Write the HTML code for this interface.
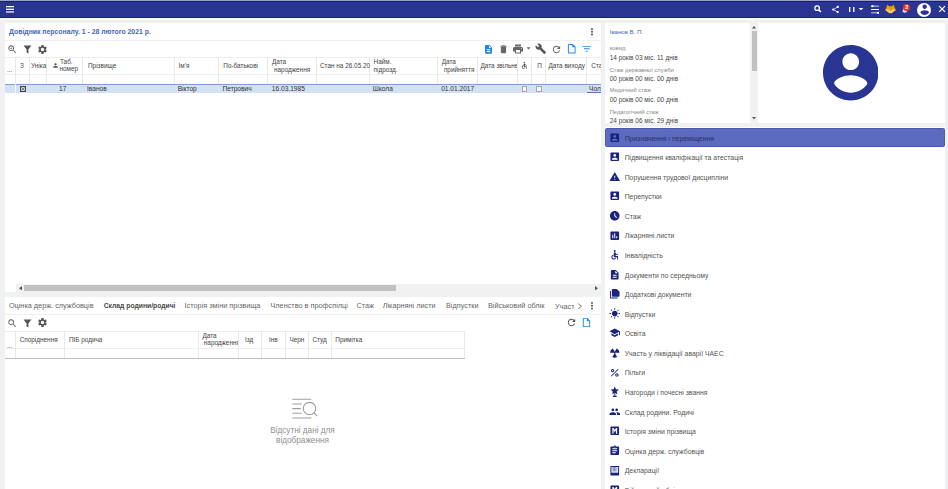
<!DOCTYPE html>
<html><head><meta charset="utf-8">
<style>
*{box-sizing:border-box;margin:0;padding:0}
html,body{width:948px;height:489px;overflow:hidden}
body{position:relative;background:#f0f1f3;font-family:"Liberation Sans",sans-serif;color:#333}
.a{position:absolute}
.t{position:absolute;white-space:nowrap;line-height:1}
svg{position:absolute;display:block}
#top{left:0;top:0;width:948px;height:18px;background:#283593;border-top:1px solid #8f96c8;border-bottom:1px solid #1f2a80}
.panel{position:absolute;background:#fff}
.hl{position:absolute;height:1px;background:#e6e6e6}
.vl{position:absolute;width:1px;background:#e9e9e9}
.hd{font-size:6.4px;color:#444}
.cell{font-size:6.6px;color:#333}
.tab{font-size:7.3px;color:#666;top:302.2px}
.mi{position:absolute;left:605px;width:339.5px;height:19.6px}
.mi .t{left:19.7px;top:8px;font-size:6.87px;color:#555}
.mi.act .t{color:#2b2f62}
.mi svg{left:3.8px;top:4.2px;width:11.5px;height:11.5px;fill:#1a237e}
</style></head>
<body>
<!-- top bar -->
<div class="a" style="left:0;top:0;width:948px;height:18px;background:#2a3593"></div>
<div class="a" style="left:0;top:0;width:948px;height:1px;background:#a09fcb"></div>
<div class="a" style="left:0;top:1px;width:948px;height:1px;background:#111c86"></div>
<div class="a" style="left:0;top:17px;width:948px;height:1px;background:#16208a"></div>
<div class="a" style="left:0;top:18px;width:948px;height:2px;background:#f8f8f6"></div>
<svg style="left:5.8px;top:6.4px;width:8.2px;height:6.6px" viewBox="0 0 8.2 6.6" fill="#fff"><rect x="0" y="0" width="8.2" height="1.25"/><rect x="0" y="2.67" width="8.2" height="1.25"/><rect x="0" y="5.35" width="8.2" height="1.25"/></svg>


<svg style="left:812px;top:3px;width:12px;height:12px" viewBox="812 3 12 12" fill="none" stroke="#fff"><circle cx="817.1" cy="8.2" r="2.25" stroke-width="1.25"/><path d="M818.8 9.9L820.9 12" stroke-width="1.5"/></svg>
<svg style="left:831px;top:5px;width:9px;height:9px" viewBox="0 0 24 24" fill="#fff"><path d="M18 16.08c-.76 0-1.440.3-1.96.77L8.91 12.7c.05-.23.09-.46.09-.7s-.04-.47-.09-.7l7.05-4.11c.54.5 1.250.81 2.04.81 1.66 0 3-1.34 3-3s-1.34-3-3-3-3 1.34-3 3c0 .24.04.47.09.7L8.04 9.81C7.5 9.31 6.79 9 6 9c-1.66 0-3 1.34-3 3s1.34 3 3 3c.79 0 1.5-.31 2.04-.81l7.12 4.16c-.05.21-.08.43-.08.65 0 1.61 1.31 2.92 2.92 2.92 1.61 0 2.92-1.31 2.92-2.92s-1.31-2.92-2.92-2.92z"/></svg>
<svg style="left:848px;top:6.5px;width:7.5px;height:5.5px" viewBox="0 0 7.5 5.5" fill="#fff"><rect x="1" y="0" width="1.35" height="5.5"/><rect x="5.1" y="0" width="1.35" height="5.5"/></svg>
<svg style="left:857px;top:5px;width:8px;height:8px" viewBox="0 0 24 24" fill="#fff"><path d="M5 9l7 7 7-7z"/></svg>
<svg style="left:870.5px;top:4.8px;width:8.5px;height:9px" viewBox="0 0 17 18" fill="#fff"><rect x="0" y="1.6" width="17" height="1.6" rx=".8"/><rect x="0" y="8.2" width="17" height="1.6" rx=".8"/><rect x="0" y="14.8" width="17" height="1.6" rx=".8"/><circle cx="2.8" cy="2.4" r="2.3"/><circle cx="14.2" cy="15.6" r="2.3"/></svg>
<svg style="left:884px;top:4px;width:12.5px;height:10.5px" viewBox="884 4 12.5 10.5"><path d="M886.2 8.2L887.2 4.8 889.2 6.3H892L893.7 4.8 894.8 8.2 896 10 890.5 14 885 10Z" fill="#eea20a"/><path d="M890.5 6.3L892 6.3 890.5 13.5Z" fill="#d88a00"/><path d="M885.5 10L888 9.2 890.5 11 893 9.2 895.5 10 890.5 13.8Z" fill="#f6cf78"/><path d="M889.8 13.1h1.4L890.5 14.2Z" fill="#222"/></svg>
<svg style="left:900.5px;top:6px;width:7.5px;height:8px" viewBox="0 0 24 24" fill="#d8e6fb"><path d="M12 22c1.1 0 2-.9 2-2h-4c0 1.1.89 2 2 2zm6-6v-5c0-3.07-1.64-5.64-4.5-6.32V4c0-.83-.67-1.5-1.5-1.5s-1.5.67-1.5 1.5v.68C7.63 5.36 6 7.92 6 11v5l-2 2v1h16v-1l-2-2z"/></svg>
<div class="a" style="left:903.1px;top:3.5px;width:7.2px;height:7.4px;border-radius:50%;background:#f2301f"></div>
<div class="t" style="left:905.2px;top:4.6px;font-size:5.5px;color:#fff;font-weight:bold">2</div>
<div class="a" style="left:917.3px;top:2.5px;width:14px;height:14px;border-radius:50%;background:#fff"></div>
<svg style="left:915.6px;top:0.8px;width:17.4px;height:17.4px" viewBox="0 0 24 24" fill="#283593"><path d="M12 5c1.66 0 3 1.34 3 3s-1.34 3-3 3-3-1.34-3-3 1.34-3 3-3zm0 14.2c-2.5 0-4.71-1.28-6-3.22.03-1.99 4-3.08 6-3.08 1.99 0 5.97 1.09 6 3.08-1.29 1.94-3.5 3.22-6 3.22z"/></svg>
<svg style="left:936px;top:3px;width:12px;height:12px" viewBox="936 3 12 12" fill="none" stroke="#fff" stroke-width="1.3"><path d="M939.2 6.1L945 11.9M945 6.1L939.2 11.9"/></svg>

<!-- upper-left panel -->
<div class="panel" style="left:4.5px;top:23px;width:596.5px;height:269px"></div>
<div class="hl" style="left:4.5px;top:40px;width:596.5px;background:#f0f0f0"></div>
<div class="t" style="left:9px;top:29px;font-size:6.87px;font-weight:bold;color:#4864bd">Довідник персоналу. 1 - 28 лютого 2021 р.</div>


<svg style="left:589.9px;top:26.80px;width:4px;height:9.50px" viewBox="0 0 4 9.50" fill="#4a4a4a"><circle cx="2" cy="2.00" r="0.95"/><circle cx="2" cy="4.80" r="0.95"/><circle cx="2" cy="7.50" r="0.95"/></svg><!-- toolbar left -->
<svg style="left:6.5px;top:43.5px;width:10.5px;height:10.5px" viewBox="0 0 24 24" fill="#555"><path d="M15.5 14h-.79l-.28-.27C15.41 12.59 16 11.11 16 9.5 16 5.91 13.09 3 9.5 3S3 5.91 3 9.5 5.91 16 9.5 16c1.61 0 3.09-.59 4.23-1.57l.27.28v.79l5 4.99L20.49 19l-4.990-5zm-6 0C7.01 14 5 11.99 5 9.5S7.01 5 9.5 5 14 7.01 14 9.5 11.99 14 9.5 14zm2.5-4h-2v2H9v-2H7V9h2V7h1v2h2v1z"/></svg>
<svg style="left:21.5px;top:43.5px;width:11px;height:11px" viewBox="0 0 24 24" fill="#555"><path d="M3.5 3.5h17L14 12v8.5l-4-2V12z"/></svg>
<svg style="left:36.5px;top:43.5px;width:11px;height:11px" viewBox="0 0 24 24" fill="#555"><path d="M19.14 12.94c.04-.3.06-.61.06-.94 0-.32-.02-.64-.07-.94l2.03-1.58c.18-.14.23-.41.12-.61l-1.92-3.32c-.12-.22-.37-.29-.59-.22l-2.39.96c-.5-.38-1.03-.7-1.62-.94l-.36-2.54c-.04-.24-.24-.41-.48-.41h-3.84c-.24 0-.43.17-.47.41l-.36 2.54c-.59.24-1.13.57-1.62.94l-2.39-.96c-.22-.08-.47 0-.59.22L2.74 8.87c-.12.21-.08.47.12.61l2.03 1.58c-.05.3-.09.63-.09.94s.02.64.07.94l-2.03 1.58c-.18.14-.23.41-.12.61l1.920 3.32c.12.22.37.29.59.22l2.39-.96c.5.38 1.03.7 1.62.94l.36 2.54c.05.24.24.41.48.41h3.84c.24 0 .44-.17.47-.41l.36-2.54c.59-.24 1.13-.56 1.62-.94l2.39.96c.22.08.47 0 .59-.22l1.92-3.32c.12-.22.07-.47-.12-.61l-2.01-1.58zM12 15.6c-1.98 0-3.6-1.62-3.6-3.6s1.62-3.6 3.6-3.6 3.6 1.62 3.6 3.6-1.62 3.6-3.6 3.6z"/></svg>
<!-- toolbar right -->
<svg style="left:483px;top:43.5px;width:11px;height:10.5px" viewBox="0 0 24 24" fill="#1e88e5"><path d="M14 2H6c-1.1 0-1.99.9-1.99 2L4 20c0 1.1.89 2 1.99 2H18c1.1 0 2-.9 2-2V8l-6-6zm2 16H8v-2h8v2zm0-4H8v-2h8v2zm-3-5V3.5L18.5 9H13z"/></svg>
<svg style="left:498px;top:43.5px;width:11px;height:10.5px" viewBox="0 0 24 24" fill="#666"><path d="M6 19c0 1.1.9 2 2 2h8c1.1 0 2-.9 2-2V7H6v12zM19 4h-3.5l-1-1h-5l-1 1H5v2h14V4z"/></svg>
<svg style="left:512px;top:43px;width:12px;height:12px" viewBox="0 0 24 24" fill="#666"><path d="M19 8H5c-1.66 0-3 1.34-3 3v6h4v4h12v-4h4v-6c0-1.66-1.34-3-3-3zm-3 11H8v-5h8v5zm3-7c-.55 0-1-.45-1-1s.45-1 1-1 1 .45 1 1-.45 1-1 1zm-1-9H6v4h12V3z"/></svg>
<svg style="left:524.5px;top:45px;width:7px;height:7px" viewBox="0 0 24 24" fill="#777"><path d="M5 8l7 8 7-8z"/></svg>
<svg style="left:535px;top:43px;width:11.5px;height:11.5px" viewBox="0 0 24 24" fill="#555"><path d="M22.7 19l-9.1-9.1c.9-2.3.4-5-1.5-6.9-2-2-5-2.4-7.4-1.3L9 6 6 9 1.6 4.7C.4 7.1.9 10.1 2.9 12.1c1.9 1.9 4.6 2.4 6.9 1.5l9.1 9.1c.4.4 1 .4 1.4 0l2.3-2.3c.5-.4.5-1.1.1-1.4z"/></svg>
<svg style="left:550.5px;top:43.5px;width:11px;height:11px" viewBox="0 0 24 24" fill="#666"><path d="M17.65 6.35C16.2 4.9 14.21 4 12 4c-4.42 0-7.99 3.58-7.99 8s3.57 8 7.99 8c3.73 0 6.84-2.55 7.73-6h-2.08c-.82 2.33-3.04 4-5.65 4-3.31 0-6-2.69-6-6s2.69-6 6-6c1.66 0 3.14.69 4.22 1.78L13 11h7V4l-2.35 2.35z"/></svg>
<svg style="left:565.5px;top:43px;width:11.5px;height:11.5px" viewBox="0 0 24 24" fill="#1e88e5"><path d="M14 2H6c-1.1 0-1.99.9-1.99 2L4 20c0 1.1.89 2 1.99 2H18c1.1 0 2-.9 2-2V8l-6-6zM6 20V4h7v5h5v11H6z"/></svg>
<svg style="left:580.5px;top:43px;width:11.5px;height:11.5px" viewBox="0 0 24 24" fill="#1e88e5"><path d="M10 18h4v-2h-4v2zM3 6v2h18V6H3zm3 7h12v-2H6v2z"/></svg>

<!-- table header -->
<div class="hl" style="left:4.5px;top:56.5px;width:596.5px;background:#eeeeee"></div>
<div class="hl" style="left:4.5px;top:74px;width:596.5px;background:#eeeeee"></div>
<div class="vl" style="left:15px;top:57px;height:27px"></div>
<div class="vl" style="left:29.3px;top:57px;height:27px"></div>
<div class="vl" style="left:46px;top:57px;height:27px"></div>
<div class="vl" style="left:82.3px;top:57px;height:27px"></div>
<div class="vl" style="left:173.8px;top:57px;height:27px"></div>
<div class="vl" style="left:218.3px;top:57px;height:27px"></div>
<div class="vl" style="left:267.3px;top:57px;height:27px"></div>
<div class="vl" style="left:316px;top:57px;height:27px"></div>
<div class="vl" style="left:369.3px;top:57px;height:27px"></div>
<div class="vl" style="left:437.3px;top:57px;height:27px"></div>
<div class="vl" style="left:477.2px;top:57px;height:27px"></div>
<div class="vl" style="left:517.2px;top:57px;height:27px"></div>
<div class="vl" style="left:531.4px;top:57px;height:27px"></div>
<div class="vl" style="left:545.4px;top:57px;height:27px"></div>
<div class="vl" style="left:585.5px;top:57px;height:27px"></div>
<div class="t hd" style="left:7px;top:67px">...</div>
<div class="t hd" style="left:20px;top:63.3px">З</div>
<div class="t hd" style="left:31px;top:63.3px">Уніка</div>
<div class="t hd" style="left:60px;top:58.6px">Таб.</div>
<div class="t hd" style="left:59.5px;top:66.4px">номер</div>
<div class="t hd" style="left:88px;top:63.3px">Прізвище</div>
<div class="t hd" style="left:178.5px;top:63.3px">Ім'я</div>
<div class="t hd" style="left:223.3px;top:63.3px">По-батькові</div>
<div class="t hd" style="left:272px;top:59px">Дата</div>
<div class="t hd" style="left:274px;top:66.8px">народження</div>
<div class="t hd" style="left:320px;top:63.3px">Стан на 26.05.20</div>
<div class="t hd" style="left:373.6px;top:59px">Найм.</div>
<div class="t hd" style="left:373.6px;top:66.8px">підрозд.</div>
<div class="t hd" style="left:441.7px;top:59px">Дата</div>
<div class="t hd" style="left:443.9px;top:66.8px">прийняття</div>
<div class="a" style="left:478.5px;top:60px;width:38.5px;height:10px;overflow:hidden"><div class="t hd" style="left:2px;top:2.8px">Дата звільнення</div></div>
<div class="t hd" style="left:537.2px;top:63.3px">П</div>
<div class="t hd" style="left:548.5px;top:63.3px">Дата виходу</div>
<div class="a" style="left:586.5px;top:60px;width:14px;height:10px;overflow:hidden"><div class="t hd" style="left:4.8px;top:3.3px">Статус</div></div>

<svg style="left:52px;top:61.5px;width:7px;height:7px" viewBox="0 0 24 24" fill="#555"><path d="M12 12c2.21 0 4-1.79 4-4s-1.79-4-4-4-4 1.79-4 4 1.79 4 4 4zm0 2c-2.67 0-8 1.34-8 4v2h16v-2c0-2.66-5.33-4-8-4z"/></svg>
<svg style="left:520px;top:60.8px;width:8.5px;height:8.5px" viewBox="0 0 24 24" fill="#555"><circle cx="12" cy="4" r="2"/><path d="M19 13v-2c-1.54.02-3.09-.75-4.07-1.83l-1.29-1.43c-.17-.19-.38-.34-.61-.45-.01 0-.01-.01-.02-.01H13c-.35-.2-.75-.3-1.19-.26C10.76 7.11 10 8.04 10 9.09V15c0 1.1.9 2 2 2h5v5h2v-5.5c0-1.1-.9-2-2-2h-3v-3.45c1.29 1.07 3.25 1.94 5 1.95zm-6.17 5c-.41 1.16-1.52 2-2.83 2-1.66 0-3-1.34-3-3 0-1.31.84-2.41 2-2.83V12.1c-2.28.46-4 2.48-4 4.9 0 2.76 2.24 5 5 5 2.42 0 4.440-1.72 4.9-4h-2.07z"/></svg>
<!-- selected row -->
<div class="a" style="left:4.5px;top:84px;width:596.5px;height:9px;background:#d3e1f3;border-top:1px solid #7e9ed6"></div>
<div class="a" style="left:15px;top:84px;width:1px;height:9px;background:#f4f8fc"></div>
<div class="a" style="left:20px;top:85.8px;width:6.2px;height:6.2px;border:1.1px solid #4a4a4a;background:#d0d0d0"></div><svg style="left:21.1px;top:86.9px;width:4px;height:4px" viewBox="0 0 10 10" stroke="#555" stroke-width="1.6"><path d="M1 1l8 8M9 1l-8 8"/></svg>
<div class="t cell" style="left:59px;top:86.1px">17</div>
<div class="t cell" style="left:87px;top:86.1px">Іванов</div>
<div class="t cell" style="left:177.7px;top:86.1px">Віктор</div>
<div class="t cell" style="left:222.5px;top:86.1px">Петрович</div>
<div class="t cell" style="left:271.8px;top:86.1px">16.03.1985</div>
<div class="t cell" style="left:372.8px;top:86.1px">Школа</div>
<div class="t cell" style="left:441.2px;top:86.1px">01.01.2017</div>
<div class="a" style="left:521.5px;top:86.3px;width:5.8px;height:5.8px;border:1px solid #a8a8a8;background:#f4f7fb"></div>
<div class="a" style="left:536px;top:86.3px;width:5.8px;height:5.8px;border:1px solid #a8a8a8;background:#f4f7fb"></div>
<div class="a" style="left:587px;top:84px;width:14px;height:9px;overflow:hidden;border-bottom:1px solid #5b6fc4"><div class="t cell" style="left:2px;top:2.3px">Чол</div></div>
<!-- h scrollbar -->
<div class="a" style="left:16px;top:283.5px;width:585px;height:8.5px;background:#f1f1f1"></div>
<div class="a" style="left:24px;top:284.7px;width:371.5px;height:6px;background:#c1c1c1"></div>
<svg style="left:18.5px;top:285.5px;width:3px;height:4.5px" viewBox="0 0 6 9" fill="#555"><path d="M6 0v9L0 4.5z"/></svg>
<svg style="left:595px;top:285.5px;width:3px;height:4.5px" viewBox="0 0 6 9" fill="#555"><path d="M0 0v9l6-4.5z"/></svg>

<!-- lower-left panel -->
<div class="panel" style="left:4.5px;top:297px;width:596.5px;height:192px"></div>


<!-- tabs -->
<div class="t tab" style="left:8.9px">Оцінка держ. службовців</div>
<div class="t tab" style="left:103.7px;font-weight:bold;color:#4a4a4a;font-size:6.78px;top:302.8px">Склад родини/родичі</div>
<div class="t tab" style="left:184.6px">Історія зміни прізвища</div>
<div class="t tab" style="left:270.5px">Членство в профспілці</div>
<div class="t tab" style="left:356.5px">Стаж</div>
<div class="t tab" style="left:382.7px">Лікарняні листи</div>
<div class="t tab" style="left:446px">Відпустки</div>
<div class="t tab" style="left:488px">Військовий облік</div>
<div class="a" style="left:553px;top:298px;width:20.6px;height:15px;overflow:hidden"><div class="t tab" style="left:2px;top:4.5px">Участь</div></div>
<svg style="left:577px;top:302.5px;width:6px;height:6.5px" viewBox="0 0 6 6.5" fill="none" stroke="#666" stroke-width="0.85"><path d="M1.2 .6L4.5 3.25 1.2 5.9"/></svg>
<svg style="left:589.9px;top:300.60px;width:4px;height:9.50px" viewBox="0 0 4 9.50" fill="#4a4a4a"><circle cx="2" cy="2.00" r="0.95"/><circle cx="2" cy="4.80" r="0.95"/><circle cx="2" cy="7.50" r="0.95"/></svg><div class="hl" style="left:4.5px;top:314px;width:596.5px;background:#eeeeee"></div>
<!-- toolbar -->
<svg style="left:6.5px;top:317.5px;width:10.5px;height:10.5px" viewBox="0 0 24 24" fill="#555"><path d="M15.5 14h-.79l-.28-.27C15.41 12.59 16 11.11 16 9.5 16 5.91 13.09 3 9.5 3S3 5.91 3 9.5 5.91 16 9.5 16c1.61 0 3.09-.59 4.23-1.57l.27.28v.79l5 4.99L20.49 19l-4.99-5zm-6 0C7.01 14 5 11.99 5 9.5S7.01 5 9.5 5 14 7.01 14 9.5 11.99 14 9.5 14z"/></svg>
<svg style="left:21.5px;top:317.5px;width:11px;height:11px" viewBox="0 0 24 24" fill="#555"><path d="M3.5 3.5h17L14 12v8.5l-4-2V12z"/></svg>
<svg style="left:36.5px;top:317px;width:11px;height:11px" viewBox="0 0 24 24" fill="#555"><path d="M19.14 12.94c.04-.3.06-.61.06-.94 0-.32-.02-.64-.07-.94l2.03-1.58c.18-.14.23-.41.12-.61l-1.92-3.32c-.12-.22-.37-.29-.59-.22l-2.39.96c-.5-.38-1.03-.7-1.62-.94l-.36-2.54c-.04-.24-.24-.41-.48-.41h-3.84c-.24 0-.43.17-.47.41l-.36 2.54c-.59.24-1.13.57-1.62.94l-2.39-.96c-.22-.08-.47 0-.59.22L2.74 8.87c-.12.21-.08.47.12.61l2.03 1.58c-.05.3-.09.63-.09.94s.02.64.07.94l-2.03 1.58c-.18.14-.23.41-.12.61l1.92 3.32c.12.22.37.29.59.22l2.39-.96c.5.38 1.03.7 1.62.94l.36 2.54c.05.24.24.41.48.41h3.840c.24 0 .44-.17.47-.41l.36-2.54c.59-.24 1.13-.56 1.62-.94l2.39.96c.22.08.47 0 .59-.22l1.92-3.32c.12-.22.07-.47-.12-.61l-2.01-1.58zM12 15.6c-1.98 0-3.6-1.62-3.6-3.6s1.62-3.6 3.6-3.6 3.6 1.62 3.6 3.6-1.62 3.6-3.6 3.6z"/></svg>
<svg style="left:566px;top:316.5px;width:11px;height:11px" viewBox="0 0 24 24" fill="#555"><path d="M17.65 6.35C16.2 4.9 14.21 4 12 4c-4.42 0-7.99 3.58-7.99 8s3.57 8 7.99 8c3.73 0 6.84-2.55 7.73-6h-2.08c-.82 2.33-3.04 4-5.65 4-3.31 0-6-2.69-6-6s2.69-6 6-6c1.66 0 3.14.69 4.22 1.78L13 11h7V4l-2.35 2.35z"/></svg>
<svg style="left:580.7px;top:316.6px;width:11px;height:11px" viewBox="0 0 24 24" fill="#1e88e5"><path d="M14 2H6c-1.1 0-1.99.9-1.99 2L4 20c0 1.1.89 2 1.99 2H18c1.1 0 2-.9 2-2V8l-6-6zM6 20V4h7v5h5v11H6z"/></svg>
<!-- lower table -->
<div class="hl" style="left:4.5px;top:330.5px;width:460px;background:#eeeeee"></div>
<div class="hl" style="left:4.5px;top:347.8px;width:460px;background:#eeeeee"></div>
<div class="hl" style="left:4.5px;top:357.8px;width:460px;height:1.2px;background:#bdbdbd"></div>
<div class="vl" style="left:15.2px;top:331px;height:27px"></div>
<div class="vl" style="left:64px;top:331px;height:27px"></div>
<div class="vl" style="left:197.6px;top:331px;height:27px"></div>
<div class="vl" style="left:238.3px;top:331px;height:27px"></div>
<div class="vl" style="left:261.3px;top:331px;height:27px"></div>
<div class="vl" style="left:284.8px;top:331px;height:27px"></div>
<div class="vl" style="left:307.8px;top:331px;height:27px"></div>
<div class="vl" style="left:331.3px;top:331px;height:27px"></div>
<div class="vl" style="left:464.2px;top:331px;height:27px"></div>
<div class="t hd" style="left:7px;top:342.5px">...</div>
<div class="t hd" style="left:19.7px;top:336.5px">Споріднення</div>
<div class="t hd" style="left:68.9px;top:336.5px">ПІБ родича</div>
<div class="t hd" style="left:202.5px;top:333px">Дата</div>
<div class="a" style="left:203.8px;top:339px;width:34px;height:9px;overflow:hidden"><div class="t hd" style="left:0;top:1px">народження</div></div>
<div class="t hd" style="left:245px;top:336.5px">Ізд</div>
<div class="t hd" style="left:269px;top:336.5px">Інв</div>
<div class="t hd" style="left:289.4px;top:336.5px">Черн</div>
<div class="t hd" style="left:312.4px;top:336.5px">Студ</div>
<div class="t hd" style="left:335.3px;top:336.5px">Примітка</div>

<!-- empty state -->
<svg style="left:290px;top:397px;width:30px;height:24px" viewBox="0 0 30 24" fill="none" stroke="#9e9e9e" stroke-width="1.1"><path d="M2.3 2.3h19M2.3 7h9.3M2.3 11.6h8.5M2.3 16.3h9.3M2.3 21h19"/><circle cx="19.5" cy="11.6" r="6.2"/><path d="M24 16l3.3 3.2"/></svg>
<div class="t" style="left:0;width:605px;text-align:center;top:426px;font-size:8.2px;color:#8f8f8f;line-height:9.6px">Відсутні дані для<br>відображення</div>

<!-- right info panel -->
<div class="panel" style="left:605px;top:23px;width:339.5px;height:100px"></div>


<div class="t" style="left:609.7px;top:28.8px;font-size:6.1px;color:#4466c0">Іванов В. П.</div>
<div class="t" style="left:609.7px;top:45.5px;font-size:5.9px;color:#888">ковид</div>
<div class="t" style="left:609.7px;top:55.4px;font-size:6.46px;color:#444">14 років 03 міс. 11 днів</div>
<div class="t" style="left:609.7px;top:67.7px;font-size:5.75px;color:#888">Стаж державної служби</div>
<div class="t" style="left:609.7px;top:75.8px;font-size:6.46px;color:#444">00 років 00 міс. 00 днів</div>
<div class="t" style="left:609.7px;top:88.2px;font-size:5.75px;color:#888">Медичний стаж</div>
<div class="t" style="left:609.7px;top:97px;font-size:6.46px;color:#444">00 років 00 міс. 00 днів</div>
<div class="t" style="left:609.7px;top:109.8px;font-size:5.75px;color:#888">Педагогічний стаж</div>
<div class="t" style="left:609.7px;top:118.4px;font-size:6.46px;color:#444">24 років 06 міс. 29 днів</div>
<div class="a" style="left:750px;top:23px;width:8px;height:100px;background:#f1f1f1"></div>
<div class="a" style="left:751.5px;top:31.3px;width:5.5px;height:40px;background:#c1c1c1"></div>
<svg style="left:752px;top:26px;width:4px;height:2.5px" viewBox="0 0 8 5" fill="#555"><path d="M0 5h8L4 0z"/></svg>
<svg style="left:752px;top:117px;width:4px;height:2.5px" viewBox="0 0 8 5" fill="#555"><path d="M0 0h8L4 5z"/></svg>
<svg style="left:822.9px;top:45px;width:55.5px;height:55.5px" viewBox="2 2 20 20" fill="#283593"><path d="M12 2C6.48 2 2 6.48 2 12s4.48 10 10 10 10-4.48 10-10S17.52 2 12 2zm0 3c1.66 0 3 1.34 3 3s-1.34 3-3 3-3-1.34-3-3 1.34-3 3-3zm0 14.2c-2.5 0-4.71-1.28-6-3.22.03-1.99 4-3.08 6-3.08 1.99 0 5.97 1.09 6 3.08-1.29 1.94-3.5 3.22-6 3.22z"/></svg>

<!-- right menu panel -->
<div class="panel" style="left:605px;top:127.3px;width:339.5px;height:362px"></div>
<div class="a" style="left:605px;top:127.5px;width:339.5px;height:19.6px;background:#5c6bc0;border:1px solid #4a59b3;border-radius:1.5px"></div>

<div class="mi act" style="top:127.50px"><svg viewBox="0 0 24 24"><path d="M3 5v14c0 1.1.89 2 2 2h14c1.1 0 2-.9 2-2V5c0-1.1-.9-2-2-2H5c-1.11 0-2 .9-2 2zm12 4c0 1.66-1.34 3-3 3s-3-1.34-3-3 1.34-3 3-3 3 1.34 3 3zm-9 8c0-2 4-3.1 6-3.1s6 1.1 6 3.1v1H6v-1z"/></svg><div class="t">Призначення і переміщення</div></div>
<div class="mi" style="top:147.08px"><svg viewBox="0 0 24 24"><path d="M3 5v14c0 1.1.89 2 2 2h14c1.1 0 2-.9 2-2V5c0-1.1-.9-2-2-2H5c-1.11 0-2 .9-2 2zm12 4c0 1.66-1.34 3-3 3s-3-1.34-3-3 1.34-3 3-3 3 1.34 3 3zm-9 8c0-2 4-3.1 6-3.1s6 1.1 6 3.1v1H6v-1z"/></svg><div class="t">Підвищення кваліфікації та атестація</div></div>
<div class="mi" style="top:166.66px"><svg viewBox="0 0 24 24"><path d="M1 21h22L12 2 1 21zm12-3h-2v-2h2v2zm0-4h-2v-4h2v4z"/></svg><div class="t">Порушення трудової дисципліни</div></div>
<div class="mi" style="top:186.24px"><svg viewBox="0 0 24 24"><path d="M3 5v14c0 1.1.89 2 2 2h14c1.1 0 2-.9 2-2V5c0-1.1-.9-2-2-2H5c-1.11 0-2 .9-2 2zm12 4c0 1.66-1.34 3-3 3s-3-1.34-3-3 1.34-3 3-3 3 1.34 3 3zm-9 8c0-2 4-3.1 6-3.1s6 1.1 6 3.1v1H6v-1z"/></svg><div class="t">Перепустки</div></div>
<div class="mi" style="top:205.82px"><svg viewBox="0 0 24 24"><path d="M11.99 2C6.47 2 2 6.48 2 12s4.47 10 9.99 10C17.52 22 22 17.52 22 12S17.52 2 11.99 2zm3.3 14.71L11 12.41V7h2v4.59l3.71 3.71-1.42 1.41z"/></svg><div class="t">Стаж</div></div>
<div class="mi" style="top:225.40px"><svg viewBox="0 0 24 24"><path d="M19 3H5c-1.1 0-2 .9-2 2v14c0 1.1.9 2 2 2h14c1.1 0 2-.9 2-2V5c0-1.1-.9-2-2-2zM9 17H7v-7h2v7zm4 0h-2V7h2v10zm4 0h-2v-4h2v4z"/></svg><div class="t">Лікарняні листи</div></div>
<div class="mi" style="top:244.98px"><svg viewBox="0 0 24 24"><circle cx="12" cy="4" r="2"/><path d="M19 13v-2c-1.54.02-3.09-.75-4.07-1.830l-1.29-1.43c-.17-.19-.38-.34-.61-.45-.01 0-.01-.01-.02-.01H13c-.35-.2-.75-.3-1.19-.26C10.76 7.11 10 8.04 10 9.09V15c0 1.1.9 2 2 2h5v5h2v-5.5c0-1.1-.9-2-2-2h-3v-3.45c1.29 1.07 3.25 1.94 5 1.95zm-6.17 5c-.41 1.16-1.52 2-2.83 2-1.66 0-3-1.34-3-3 0-1.31.84-2.41 2-2.83V12.1c-2.28.46-4 2.48-4 4.9 0 2.76 2.24 5 5 5 2.42 0 4.44-1.72 4.9-4h-2.07z"/></svg><div class="t">Інвалідність</div></div>
<div class="mi" style="top:264.56px"><svg viewBox="0 0 24 24"><path d="M14 2H6c-1.1 0-1.99.9-1.99 2L4 20c0 1.1.89 2 1.99 2H18c1.1 0 2-.9 2-2V8l-6-6zm2 16H8v-2h8v2zm0-4H8v-2h8v2zm-3-5V3.5L18.5 9H13z"/></svg><div class="t">Документи по середньому</div></div>
<div class="mi" style="top:284.14px"><svg viewBox="0 0 24 24"><path d="M4 6H2v14c0 1.1.9 2 2 2h14v-2H4V6zm16-4H8c-1.1 0-2 .9-2 2v12c0 1.1.9 2 2 2h12c1.1 0 2-.9 2-2V8l-6-6z"/></svg><div class="t">Додаткові документи</div></div>
<div class="mi" style="top:303.72px"><svg viewBox="0 0 24 24"><path d="M6.76 4.84l-1.8-1.79-1.41 1.41 1.79 1.79 1.42-1.41zM4 10.5H1v2h3v-2zm9-9.95h-2V3.5h2V.55zm7.45 3.91l-1.41-1.41-1.79 1.79 1.41 1.41 1.79-1.79zm-3.21 13.7l1.79 1.8 1.41-1.41-1.8-1.79-1.4 1.4zM20 10.5v2h3v-2h-3zm-8-5c-3.31 0-6 2.69-6 6s2.69 6 6 6 6-2.69 6-6-2.69-6-6-6zm-1 16.95h2V19.5h-2v2.95zm-7.45-3.91l1.41 1.41 1.79-1.8-1.41-1.41-1.79 1.8z"/></svg><div class="t">Відпустки</div></div>
<div class="mi" style="top:323.30px"><svg viewBox="0 0 24 24"><path d="M5 13.18v4L12 21l7-3.82v-4L12 17l-7-3.82zM12 3L1 9l11 6 9-4.91V17h2V9L12 3z"/></svg><div class="t">Освіта</div></div>
<div class="mi" style="top:342.88px"><svg viewBox="0 0 24 24"><circle cx="12" cy="12" r="2"/><path d="M12 10L8 3a10 10 0 0 0-6 9h8zM14 12h8a10 10 0 0 0-6-9l-4 7zM11 14l-4 7a10 10 0 0 0 10 0l-4-7z"/></svg><div class="t">Участь у ліквідації аварії ЧАЕС</div></div>
<div class="mi" style="top:362.46px"><svg viewBox="0 0 24 24"><path d="M7.5 11C9.43 11 11 9.43 11 7.5S9.43 4 7.5 4 4 5.57 4 7.5 5.57 11 7.5 11zm0-5C8.33 6 9 6.67 9 7.5S8.33 9 7.5 9 6 8.33 6 7.5 6.67 6 7.5 6zM4.0 18.58L18.58 4.0 20 5.42 5.42 20zM16.5 13c-1.93 0-3.5 1.57-3.5 3.5s1.57 3.5 3.5 3.5 3.5-1.57 3.5-3.5-1.57-3.5-3.5-3.5zm0 5c-.83 0-1.5-.67-1.5-1.5s.67-1.5 1.5-1.5 1.5.67 1.5 1.5-.67 1.5-1.5 1.5z"/></svg><div class="t">Пільги</div></div>
<div class="mi" style="top:382.04px"><svg viewBox="0 0 24 24"><path d="M12 1l2.6 5.6 6 .7-4.5 4.1 1.2 6L12 14.4l-5.3 3 1.2-6L3.4 7.3l6-.7z"/><path d="M11 15h2v5h-2z"/><path d="M8 20h8v3H8z"/></svg><div class="t">Нагороди і почесні звання</div></div>
<div class="mi" style="top:401.62px"><svg viewBox="0 0 24 24"><path d="M16 11c1.66 0 2.99-1.34 2.99-3S17.66 5 16 5c-1.66 0-3 1.34-3 3s1.34 3 3 3zm-8 0c1.66 0 2.99-1.34 2.99-3S9.66 5 8 5C6.34 5 5 6.34 5 8s1.34 3 3 3zm0 2c-2.33 0-7 1.17-7 3.5V19h14v-2.5c0-2.33-4.67-3.5-7-3.5zm8 0c-.29 0-.62.02-.97.05 1.16.84 1.97 1.97 1.97 3.45V19h6v-2.5c0-2.33-4.67-3.5-7-3.5z"/></svg><div class="t">Склад родини. Родичі</div></div>
<div class="mi" style="top:421.20px"><svg viewBox="0 0 24 24"><path d="M5 3h14c1.1 0 2 .9 2 2v14c0 1.1-.9 2-2 2H5c-1.1 0-2-.9-2-2V5c0-1.1.9-2 2-2zm2 3v12h2.5v-7.5L12 15l2.5-4.5V18H17V6h-2.5L12 10.5 9.5 6z"/></svg><div class="t">Історія зміни прізвища</div></div>
<div class="mi" style="top:440.78px"><svg viewBox="0 0 24 24"><path d="M19 3h-4.18C14.4 1.84 13.3 1 12 1c-1.3 0-2.4.84-2.82 2H5c-1.1 0-2 .9-2 2v14c0 1.1.9 2 2 2h14c1.1 0 2-.9 2-2V5c0-1.1-.9-2-2-2zm-7 0c.55 0 1 .45 1 1s-.45 1-1 1-1-.45-1-1 .45-1 1-1zm2 14H7v-2h7v2zm3-4H7v-2h10v2zm0-4H7V7h10v2z"/></svg><div class="t">Оцінка держ. службовців</div></div>
<div class="mi" style="top:460.36px"><svg viewBox="0 0 24 24"><path d="M5 3h14v15H5z" fill="#dfe2f3"/><path d="M3 2h18v20H3zM5 4v12h14V4zM8 4h1v9H8zM11 4h1v9h-1zM14 4h1v9h-1z"/></svg><div class="t">Декларації</div></div>
<div class="mi" style="top:479.94px"><svg viewBox="0 0 24 24"><path d="M5 3h14c1.1 0 2 .9 2 2v14c0 1.1-.9 2-2 2H5c-1.1 0-2-.9-2-2V5c0-1.1.9-2 2-2zm2 3v12h2.5v-7.5L12 15l2.5-4.5V18H17V6h-2.5L12 10.5 9.5 6z"/></svg><div class="t">Військовий облік</div></div>
</body></html>
